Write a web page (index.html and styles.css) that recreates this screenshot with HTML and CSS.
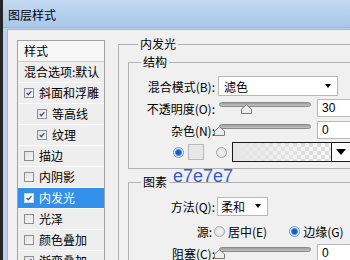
FILE: index.html
```html
<!DOCTYPE html>
<html>
<head>
<meta charset="utf-8">
<link rel="stylesheet" href="styles.css">
</head>
<body>
<div class="win">
  <div class="titlebar">图层样式</div>
  <div class="client">
    <div class="list">
      <div class="item head">样式</div>
      <div class="item">混合选项:默认</div>
      <div class="item"><span class="cb on"><svg viewBox="0 0 10 10"><path d="M2.2 5 L4.2 7.2 L8 2.6"/></svg></span>斜面和浮雕</div>
      <div class="item sub"><span class="cb on"><svg viewBox="0 0 10 10"><path d="M2.2 5 L4.2 7.2 L8 2.6"/></svg></span>等高线</div>
      <div class="item sub"><span class="cb on"><svg viewBox="0 0 10 10"><path d="M2.2 5 L4.2 7.2 L8 2.6"/></svg></span>纹理</div>
      <div class="item"><span class="cb"></span>描边</div>
      <div class="item"><span class="cb"></span>内阴影</div>
      <div class="item sel"><span class="cb on"><svg viewBox="0 0 10 10"><path d="M2.2 5 L4.2 7.2 L8 2.6"/></svg></span>内发光</div>
      <div class="item"><span class="cb"></span>光泽</div>
      <div class="item"><span class="cb"></span>颜色叠加</div>
      <div class="item"><span class="cb on"><svg viewBox="0 0 10 10"><path d="M2.2 5 L4.2 7.2 L8 2.6"/></svg></span>渐变叠加</div>
    </div>
    <fieldset class="grp outer">
      <legend>内发光</legend>
      <fieldset class="grp struct">
        <legend>结构</legend>
        <div class="row">
          <span class="lbl">混合模式(B):</span>
          <div class="select wide"><span>滤色</span><span class="arrow"></span></div>
        </div>
        <div class="row">
          <span class="lbl">不透明度(O):</span>
          <div class="slider"><div class="track"></div><svg class="thumb" style="left:30%" viewBox="0 0 11 10"><path d="M0.5 9.5 V5 L5.5 0.8 L10.5 5 V9.5 Z"/></svg></div>
          <div class="num">30</div>
        </div>
        <div class="row">
          <span class="lbl">杂色(N):</span>
          <div class="slider"><div class="track"></div><svg class="thumb" style="left:0%" viewBox="0 0 11 10"><path d="M0.5 9.5 V5 L5.5 0.8 L10.5 5 V9.5 Z"/></svg></div>
          <div class="num">0</div>
        </div>
        <div class="row colors">
          <span class="radio on"></span>
          <span class="swatch"></span>
          <span class="radio"></span>
          <span class="grad"></span>
          <span class="gbtn"><span class="arrow big"></span></span>
        </div>
      </fieldset>
      <fieldset class="grp elem">
        <legend>图素</legend>
        <div class="row">
          <span class="lbl">方法(Q):</span>
          <div class="select narrow"><span>柔和</span><span class="arrow"></span></div>
        </div>
        <div class="row src">
          <span class="lbl">源:</span>
          <span class="radio"></span><span class="opt">居中(E)</span>
          <span class="radio on"></span><span class="opt">边缘(G)</span>
        </div>
        <div class="row last">
          <span class="lbl">阻塞(C):</span>
          <div class="slider"><div class="track"></div><svg class="thumb" style="left:0%" viewBox="0 0 11 10"><path d="M0.5 9.5 V5 L5.5 0.8 L10.5 5 V9.5 Z"/></svg></div>
          <div class="num">0</div>
        </div>
      </fieldset>
    </fieldset>
  </div>
</div>
<div class="note">e7e7e7</div>
</body>
</html>
```

FILE: styles.css
```css
* { box-sizing: border-box; }
html, body {
  margin: 0;
  width: 350px;
  height: 260px;
  overflow: hidden;
}
body {
  position: relative;
  background: #f0f0f0;
  font: 12px "Noto Sans CJK SC", "Liberation Sans", sans-serif;
  color: #000;
}
.win {
  display: flex;
  flex-direction: column;
  height: 260px;
  border-left: 3px solid #262626;
}
.titlebar {
  height: 28px;
  flex: none;
  padding-left: 5px;
  line-height: 30px;
  background: linear-gradient(#c4d9f1, #a9c7ea);
  border-bottom: 1px solid #9fb6d0;
}
.client {
  flex: 1;
  display: flex;
  align-items: flex-start;
  overflow: hidden;
  background: #f0f0f0;
  border-left: 4px solid #bdd3ec;
  border-top: 1px solid #bdd3ec;
  padding: 7px 0 0 10px;
  box-shadow: inset 1px 1px 0 #a8b6c6;
}
.list {
  flex: none;
  width: 88px;
  margin-top: 4px;
  border: 1px solid #a3a3a3;
  background: #eeeeee;
}
.item {
  height: 21px;
  display: flex;
  align-items: center;
  gap: 5px;
  padding-left: 6px;
  border-bottom: 1px solid #fbfbfb;
  white-space: nowrap;
  line-height: 20px;
}
.item.head {
  background: #f6f6f6;
  border-bottom: 1px solid #c9c9c9;
}
.item.sub { padding-left: 19px; }
.item.sel {
  background: #3390ea;
  color: #fff;
}
.cb {
  flex: none;
  width: 10px;
  height: 10px;
  border: 1px solid #8e8f8f;
  background: linear-gradient(135deg, #e2e2e2, #f7f7f7);
  display: flex;
}
.cb svg { width: 8px; height: 8px; }
.cb path {
  fill: none;
  stroke: #3a4f83;
  stroke-width: 1.6;
}
.sel .cb { background: #fff; border-color: #c6d8ee; }
.sel .cb path { stroke: #2b55a8; }

.grp {
  margin: 0;
  border: 1px solid #b3b3b3;
  min-width: 0;
}
.grp legend {
  line-height: 16px;
  padding: 0 2px;
}
.outer {
  flex: none;
  width: 250px;
  margin-left: 13px;
  padding: 0 0 0 9px;
  height: 240px;
}
.outer > legend { margin-left: 10px; }
.struct, .elem {
  padding: 6px 0 6px 0;
  width: 240px;
}
.struct { margin-top: 2px; }
.elem { margin-top: 5px; padding-bottom: 0; height: 100px; }
.struct > legend, .elem > legend { margin-left: 12px; }

.row {
  height: 20px;
  display: flex;
  align-items: center;
  margin-top: 2px;
  white-space: nowrap;
}
.struct > legend + .row, .elem > legend + .row { margin-top: 0; }
.elem .row.src { margin-top: 5px; }
.lbl {
  flex: none;
  width: 86px;
  margin-right: 3px;
  text-align: right;
}
.select {
  height: 20px;
  display: flex;
  align-items: center;
  justify-content: space-between;
  background: #fff;
  border: 1px solid #b9b9b9;
  padding: 0 6px 0 5px;
}
.select.wide { width: 120px; }
.select.narrow { width: 51px; height: 19px; padding-left: 3px; margin-left: -1px; }
.arrow {
  width: 0;
  height: 0;
  border-left: 3.5px solid transparent;
  border-right: 3.5px solid transparent;
  border-top: 4px solid #000;
}
.arrow.big {
  border-left-width: 5px;
  border-right-width: 5px;
  border-top-width: 6px;
}
.slider {
  position: relative;
  flex: none;
  width: 92px;
  height: 20px;
  margin-left: 1px;
}
.track {
  margin-top: 4px;
  height: 5px;
  border-radius: 3px;
  border: 1px solid #8a8a8a;
  background: linear-gradient(#9d9d9d, #c4c4c4);
}
.thumb {
  position: absolute;
  top: 6px;
  width: 11px;
  height: 10px;
  margin-left: -5.5px;
}
.thumb path {
  fill: #ececec;
  stroke: #7a7a7a;
  stroke-width: 1;
}
.num {
  flex: none;
  margin-left: 6px;
  width: 40px;
  height: 18px;
  line-height: 16px;
  padding-left: 4px;
  background: #fff;
  border: 1px solid #b9b9b9;
  font-family: "Liberation Sans", sans-serif;
}
.radio {
  flex: none;
  width: 11px;
  height: 11px;
  border-radius: 50%;
  border: 1px solid #a3a3a3;
  background: radial-gradient(circle at 50% 50%, #f4f4f4, #dcdcdc);
}
.radio.on {
  border-color: #7d9ec2;
  background: radial-gradient(circle at 50% 50%, #1c5cb4 0 2px, #4d97e2 3px, #cfe4f6 4px, #eef5fb 5px);
}
.colors { margin-top: 2px; }
.colors .radio.on { margin-left: 44px; }
.swatch {
  flex: none;
  width: 16px;
  height: 16px;
  margin-left: 4px;
  background: #e7e7e7;
  border: 1px solid #b9b9b9;
}
.colors .radio:not(.on) { margin-left: 12px; }
.grad {
  flex: none;
  width: 99px;
  height: 20px;
  margin-left: 5px;
  border: 1px solid #1a1a1a;
  border-right: none;
  background:
    linear-gradient(to right, #e7e7e7, rgba(231,231,231,0)),
    repeating-conic-gradient(#dcdcdc 0 25%, #fafafa 0 50%) 0 0 / 8px 8px;
}
.gbtn {
  flex: none;
  width: 20px;
  height: 20px;
  display: flex;
  align-items: center;
  justify-content: center;
  background: #fff;
  border: 1px solid #1a1a1a;
}
.src .lbl { width: 83px; margin-right: 2px; }
.src .opt { margin-left: 3px; }
.src .radio.on { margin-left: 22px; }
.note {
  position: absolute;
  left: 173px;
  top: 167px;
  font: 18px/18px "Liberation Sans", sans-serif;
  color: #3a5bc7;
}
```
